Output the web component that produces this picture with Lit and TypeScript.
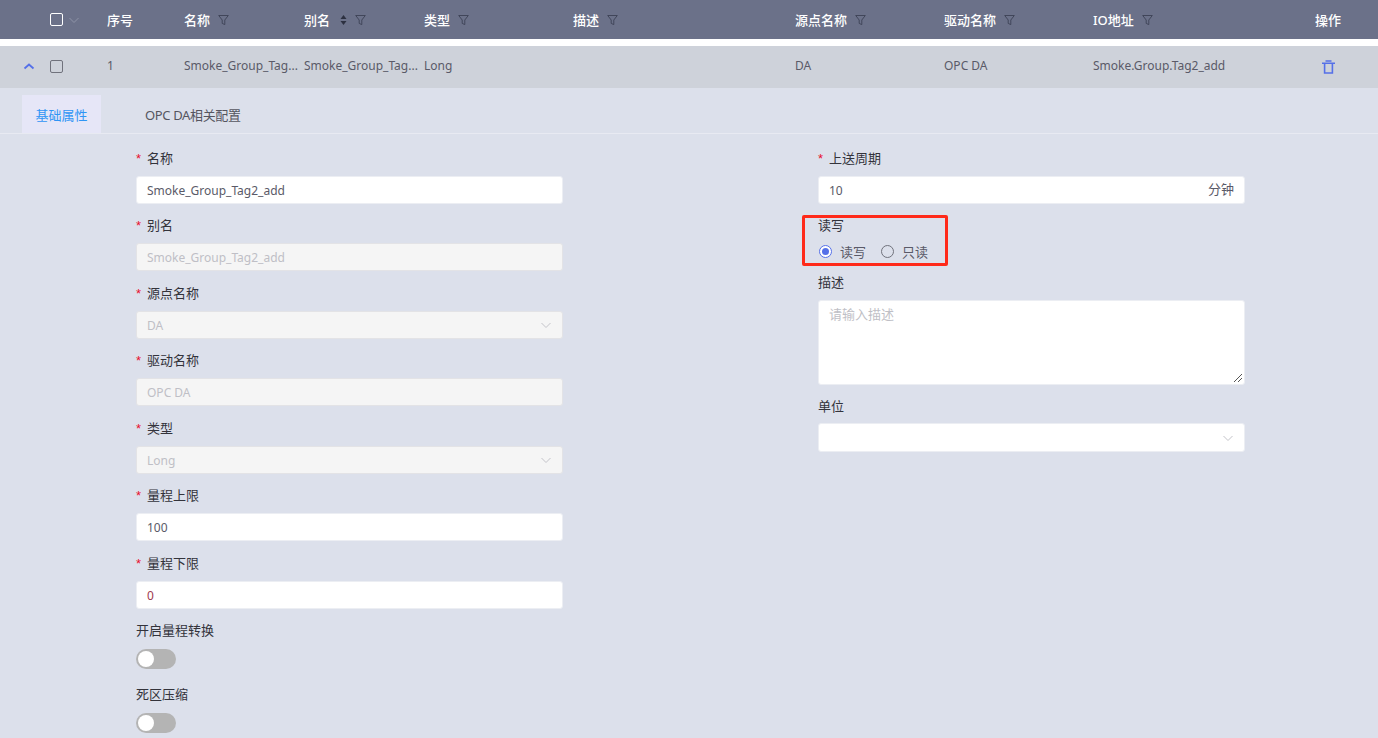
import { LitElement, html, css } from "lit";
import { customElement } from "lit/decorators.js";

const filter = html`<svg class="filter" width="11" height="12" viewBox="0 0 11 12" fill="none" stroke="#41465a" stroke-width="1"><path d="M.7 1.5h9.6L6.8 6v4.6L4.2 9.4V6z"/></svg>`;
const chev = (c: string) => html`<svg class="chev" width="12" height="12" viewBox="0 0 12 12" fill="none" stroke=${c} stroke-width="1"><path d="M1.5 4l4.5 4.5L10.5 4"/></svg>`;

@customElement("app-root")
export class AppRoot extends LitElement {
  static styles = css`
    :host { display: block; width: 1378px; height: 738px; overflow: hidden; position: relative; background: #dce0eb;
      font-family: "Noto Sans", "Noto Sans CJK SC", sans-serif; font-size: 12px; color: #5a5a68; }
    * { box-sizing: border-box; }
    .grid { display: grid; grid-template-columns: 50px 57px 77px 120px 120px 149px 222px 149px 149px 222px 63px; align-items: center; }
    .head { height: 39px; background: #6b7189; color: #fff; font-weight: 500; }
    .head .cell { display: flex; align-items: center; font-size: 13px; }
    .gap { height: 7px; background: #fff; }
    .row { height: 42px; background: #ced2da; }
    .cell { white-space: nowrap; overflow: hidden; line-height: 16px; }
    .row .cell { padding-bottom: 2px; }
    .filter { margin-left: 8px; flex: none; }
    .sort { margin-left: 10px; flex: none; }
    .box { width: 13px; height: 13px; border-radius: 2px; border: 1px solid #70727c; display: block; }
    .head .box { border-color: #fff; }
    .row .box { margin-top: -2px; }
    .checkcell { display: flex; align-items: center; gap: 5px; }
    .up { margin-left: 23px; display: block; }
    .trash { margin-left: 7px; display: block; }
    .tabs { height: 46px; padding: 7px 0 0 22px; display: flex; border-bottom: 1px solid #e8eaf2; }
    .tab { height: 38px; display: flex; align-items: center; font-size: 13px; }
    .tab.on { width: 79px; background: #e6e6f7; color: #2f95f5; justify-content: center; }
    .tab.off { margin-left: 44px; color: #55555f; letter-spacing: -0.35px; }
    .form { display: grid; grid-template-columns: 427px 427px; column-gap: 255px; padding: 0 0 0 136px; margin-top: -0.2px; }
    .col { display: flex; flex-direction: column; }
    .f { height: 67.5px; padding-top: 13px; }
    .lab { height: 20px; line-height: 20px; font-size: 13px; color: #33333b; margin-bottom: 9px; white-space: nowrap; }
    .f:not(.sf) .lab { margin-top: 1px; margin-bottom: 8px; }
    .lab i { color: #e8112d; font-style: normal; font-family: "Liberation Sans", sans-serif; font-size: 13px; margin: 0 4px 0 0; display: inline-block; width: 7px; }
    .in { height: 28px; border: 1px solid #eceef3; border-radius: 3px; background: #fff; display: flex; align-items: center; justify-content: space-between; padding: 1px 10px 0; font-size: 12px; color: #5a5a68; }
    .in.dis { background: #f5f5f5; color: #bfbfc6; border-color: #e3e3e6; }
    .in.end { justify-content: flex-end; height: 29px; }
    .unit { font-size: 13px; margin-top: -4px; }
    .red { color: #a03a50; }
    .sw { width: 40px; height: 20px; border-radius: 10px; background: #b4b4b4; padding: 2px; }
    .sw span { display: block; width: 16px; height: 16px; border-radius: 50%; background: #fff; }
    .sf { height: 64px; padding-top: 14px; }
    .radios { display: flex; align-items: center; height: 20px; font-size: 13px; color: #5a5a68; margin-top: -2px; padding-left: 1px; }
    .radio { width: 13px; height: 13px; border-radius: 50%; border: 1px solid #70727c; margin-right: 8px; flex: none; }
    .radio.on { border-color: #5570e8; padding: 2px; background: #fff; }
    .radio.on span { display: block; width: 7px; height: 7px; border-radius: 50%; background: #5570e8; }
    .ro { margin-left: 15px; }
    .rw { height: 71px; }
    .desc .lab { margin-bottom: 8px; }
    .unitf .lab { margin-bottom: 7px; }
    .ta { height: 85px; border: 1px solid #eceef3; border-radius: 3px; background: #fff; padding: 3px 10px; color: #bfbfc6; font-size: 13px; position: relative; }
    .grip { position: absolute; right: 1px; bottom: 1px; display: block; }
    .unitf { padding-top: 11px; }
    .hl { position: absolute; left: 802px; top: 215px; width: 146px; height: 51px; border: 3px solid #ff2a1a; border-radius: 2px; pointer-events: none; }
  `;

  private field(label: string, value: string, opts: { req?: boolean; dis?: boolean; sel?: boolean; red?: boolean } = {}) {
    return html`<div class="f">
      <div class="lab">${opts.req ? html`<i>*</i>` : ""}${label}</div>
      <div class="in ${opts.dis ? "dis" : ""}">
        <span class=${opts.red ? "red" : ""}>${value}</span>${opts.sel ? chev("#c4c4ca") : ""}
      </div>
    </div>`;
  }

  render() {
    return html`
      <div class="grid head">
        <div></div>
        <div class="checkcell"><span class="box"></span>${chev("#8f94a8")}</div>
        <div class="cell">序号</div>
        <div class="cell">名称${filter}</div>
        <div class="cell">别名<svg class="sort" width="7" height="12" viewBox="0 0 7 12" fill="#2c3040"><path d="M3.5 1L6.5 5H.5zM3.5 11L.5 7h6z"/></svg>${filter}</div>
        <div class="cell">类型${filter}</div>
        <div class="cell">描述${filter}</div>
        <div class="cell">源点名称${filter}</div>
        <div class="cell">驱动名称${filter}</div>
        <div class="cell">IO地址${filter}</div>
        <div class="cell">操作</div>
      </div>
      <div class="gap"></div>
      <div class="grid row">
        <div><svg class="up" width="12" height="12" viewBox="0 0 12 12" fill="none" stroke="#5570e8" stroke-width="1.8"><path d="M1.5 7.5L6 3.5l4.5 4"/></svg></div>
        <div><span class="box"></span></div>
        <div class="cell">1</div>
        <div class="cell">Smoke_Group_Tag...</div>
        <div class="cell">Smoke_Group_Tag...</div>
        <div class="cell">Long</div>
        <div class="cell"></div>
        <div class="cell">DA</div>
        <div class="cell">OPC DA</div>
        <div class="cell">Smoke.Group.Tag2_add</div>
        <div><svg class="trash" width="13" height="14" viewBox="0 0 13 14" fill="none" stroke="#5570e8" stroke-width="1.6"><path d="M0 3.2h13M3.5 1h6M2.6 3.2v9.8h7.8V3.2"/></svg></div>
      </div>
      <div class="tabs">
        <div class="tab on">基础属性</div>
        <div class="tab off">OPC DA相关配置</div>
      </div>
      <div class="form">
        <div class="col">
          ${this.field("名称", "Smoke_Group_Tag2_add", { req: true })}
          ${this.field("别名", "Smoke_Group_Tag2_add", { req: true, dis: true })}
          ${this.field("源点名称", "DA", { req: true, dis: true, sel: true })}
          ${this.field("驱动名称", "OPC DA", { req: true, dis: true })}
          ${this.field("类型", "Long", { req: true, dis: true, sel: true })}
          ${this.field("量程上限", "100", { req: true })}
          ${this.field("量程下限", "0", { req: true, red: true })}
          <div class="f sf"><div class="lab">开启量程转换</div><div class="sw"><span></span></div></div>
          <div class="f sf"><div class="lab">死区压缩</div><div class="sw"><span></span></div></div>
        </div>
        <div class="col">
          <div class="f"><div class="lab"><i>*</i>上送周期</div><div class="in"><span>10</span><span class="unit">分钟</span></div></div>
          <div class="f rw"><div class="lab">读写</div>
            <div class="radios"><span class="radio on"><span></span></span>读写<span class="radio ro"></span>只读</div></div>
          <div class="desc"><div class="lab">描述</div>
            <div class="ta">请输入描述
              <svg class="grip" width="10" height="10" viewBox="0 0 10 10" stroke="#555" fill="none"><path d="M1 9l8-8M5 9l4-4"/></svg></div></div>
          <div class="unitf"><div class="lab">单位</div><div class="in end">${chev("#c4c4ca")}</div></div>
        </div>
      </div>
      <div class="hl"></div>
    `;
  }
}
